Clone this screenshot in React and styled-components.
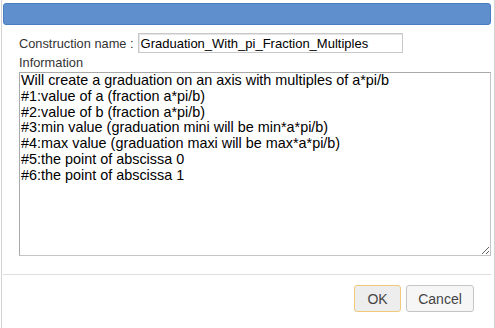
import React from "react";
import styled, { createGlobalStyle } from "styled-components";

const GlobalStyle = createGlobalStyle`
  html, body {
    margin: 0;
    padding: 0;
    background: #fff;
  }
  body {
    font-family: "Liberation Sans", Arial, sans-serif;
    font-size: 13px;
    color: #333;
  }
`;

const Dialog = styled.div`
  box-sizing: border-box;
  width: 494px;
  height: 340px;
  margin: -2px 0 0 1px;
  border: 1px solid #d3d3d3;
  border-radius: 3px;
  padding: 4px 3px 0 1px;
  display: flex;
  flex-direction: column;
`;

const TitleBar = styled.div`
  height: 22px;
  box-sizing: border-box;
  background: #5f8fcd;
  border: 1px solid #4a7cc2;
  border-radius: 3px;
`;

const Content = styled.div`
  padding: 7px 0 0 16px;
  display: flex;
  flex-direction: column;
`;

const Row = styled.div`
  display: flex;
  align-items: center;
  height: 22px;
`;

const Label = styled.label`
  font-size: 12.8px;
  color: #333;
  white-space: pre;
  margin-right: 4px;
`;

const NameInput = styled.input`
  box-sizing: border-box;
  width: 265px;
  height: 20px;
  border: 1px solid #c9c9c9;
  box-shadow: inset 1px 1px 0 #e4e4e4;
  padding: 0 2px;
  font-family: "Liberation Sans", Arial, sans-serif;
  font-size: 13px;
  color: #000;
  outline: none;
`;

const InfoLabel = styled(Label)`
  display: block;
  height: 16px;
  line-height: 16px;
  margin-top: 1px;
`;

const InfoArea = styled.textarea`
  box-sizing: border-box;
  width: 472px;
  height: 184px;
  margin-top: 1px;
  border: 1px solid #a9a9a9;
  border-right-color: #c4c4c4;
  border-bottom-color: #c4c4c4;
  padding: 0 2px 0 1px;
  font-family: "Liberation Sans", Arial, sans-serif;
  font-size: 14.4px;
  line-height: 15.8px;
  color: #000;
  resize: vertical;
  outline: none;
`;

const ButtonPane = styled.div`
  margin-top: 18px;
  border-top: 1px solid #dddddd;
  display: flex;
  justify-content: flex-end;
  gap: 5px;
  padding: 10px 17px 0 0;
`;

const Button = styled.button`
  box-sizing: border-box;
  height: 27px;
  width: ${(p) => p.$w}px;
  padding: 0;
  border-radius: 3px;
  border: 1px solid ${(p) => (p.$focus ? "#f1c97a" : "#c5c5c5")};
  background: ${(p) => (p.$focus ? "#ededed" : "#f6f6f6")};
  color: #454545;
  font-family: "Liberation Sans", Arial, sans-serif;
  font-size: 14px;
  cursor: pointer;
`;

const info = `Will create a graduation on an axis with multiples of a*pi/b
#1:value of a (fraction a*pi/b)
#2:value of b (fraction a*pi/b)
#3:min value (graduation mini will be min*a*pi/b)
#4:max value (graduation maxi will be max*a*pi/b)
#5:the point of abscissa 0
#6:the point of abscissa 1`;

export default function App() {
  return (
    <>
      <GlobalStyle />
      <Dialog>
        <TitleBar />
        <Content>
          <Row>
            <Label>Construction name :</Label>
            <NameInput defaultValue="Graduation_With_pi_Fraction_Multiples" />
          </Row>
          <InfoLabel>Information</InfoLabel>
          <InfoArea defaultValue={info} />
        </Content>
        <ButtonPane>
          <Button $focus $w={47}>OK</Button>
          <Button $w={68}>Cancel</Button>
        </ButtonPane>
      </Dialog>
    </>
  );
}
